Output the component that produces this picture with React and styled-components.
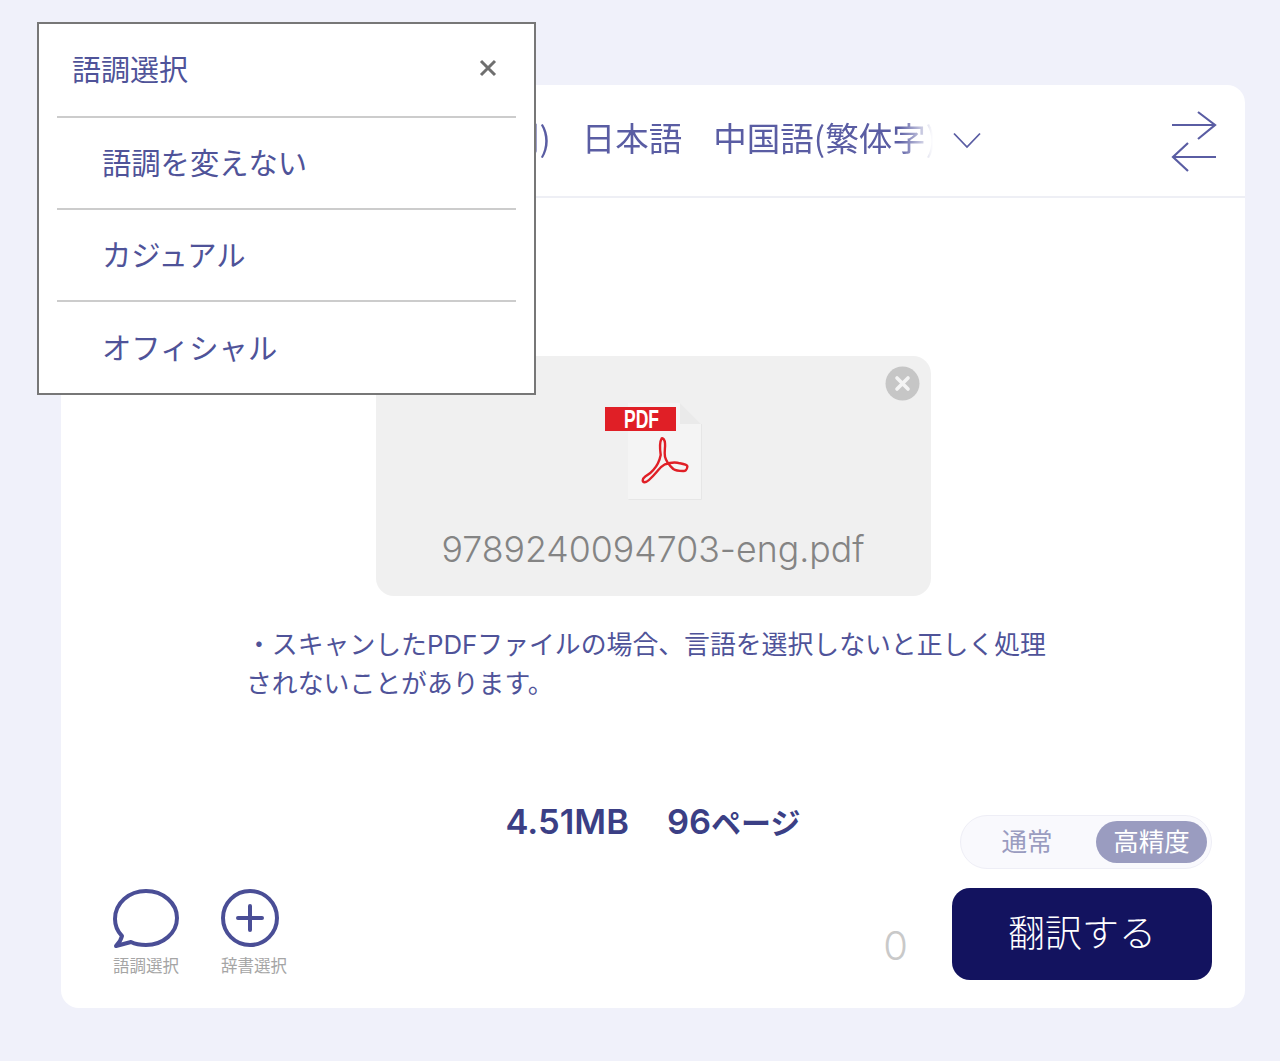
import React from "react";
import styled, { createGlobalStyle } from "styled-components";

const GlobalStyle = createGlobalStyle`
  * {
    box-sizing: border-box;
  }

  body {
    margin: 0;
    background: #f0f1fa;
    font-family: "Noto Sans CJK JP", "Noto Sans", sans-serif;
    font-weight: 400;
    color: #4f5399;
  }
`;

const Page = styled.div`
  position: relative;
  width: 1280px;
  height: 1061px;
  padding: 85px 35px 53px 61px;
`;

const Card = styled.main`
  height: 923px;
  background: #ffffff;
  border-radius: 18px;
  display: flex;
  flex-direction: column;
  overflow: hidden;
`;

const Header = styled.header`
  height: 113px;
  flex: none;
  display: flex;
  align-items: center;
  padding-right: 28px;
  border-bottom: 2px solid #eeeff5;
`;

const LangStrip = styled.div`
  width: 876px;
  flex: none;
  display: flex;
  justify-content: flex-end;
  gap: 31px;
  margin-bottom: 7px;
  white-space: nowrap;
  font-size: 33.5px;
  line-height: 46px;
  color: #5a5da3;
  -webkit-mask-image: linear-gradient(to right, #000 838px, transparent 872px);
  mask-image: linear-gradient(to right, #000 838px, transparent 872px);
`;

const Chevron = styled.svg`
  width: 28px;
  height: 17px;
  margin-left: 16px;
  flex: none;
`;

const SwapIcon = styled.svg`
  width: 46px;
  height: 62px;
  margin: 2px 0 0 auto;
  flex: none;
`;

const Body = styled.section`
  flex: 1;
  display: flex;
  flex-direction: column;
  align-items: center;
  padding-top: 158px;
`;

const FileBox = styled.div`
  position: relative;
  width: 555px;
  height: 240px;
  background: #f0f0f0;
  border-radius: 18px;
  display: flex;
  flex-direction: column;
  align-items: center;
  padding-top: 44px;
`;

const RemoveButton = styled.svg`
  position: absolute;
  top: 10px;
  right: 11px;
  width: 35px;
  height: 35px;
`;

const PdfIcon = styled.svg`
  width: 110px;
  height: 105px;
  margin-left: 3px;
  flex: none;
`;

const FileName = styled.div`
  margin-top: 22px;
  font-family: Inter, "Liberation Sans", sans-serif;
  font-weight: 300;
  font-size: 35.7px;
  line-height: 44px;
  white-space: nowrap;
  color: #848484;
`;

const Note = styled.p`
  width: 812px;
  margin: 29px 0 0 -2px;
  font-family: Inter, "Noto Sans CJK JP", sans-serif;
  font-size: 25.85px;
  line-height: 39px;
  white-space: nowrap;
  color: #4f5399;
`;

const Bottom = styled.div`
  width: 100%;
  margin-top: auto;
  padding: 0 33px 28px;
  display: grid;
  grid-template-columns: 1fr auto 1fr;
  grid-template-rows: auto auto;
`;

const Stats = styled.div`
  grid-column: 2;
  grid-row: 1;
  display: flex;
  gap: 38px;
  margin-top: -5px;
  font-family: Inter, "Noto Sans CJK JP", sans-serif;
  font-weight: 600;
  font-size: 34.5px;
  line-height: 44px;
  white-space: nowrap;
  color: #3b3f85;
`;

const StatUnit = styled.span`
  font-size: 30px;
`;

const Tools = styled.div`
  grid-column: 1;
  grid-row: 2;
  align-self: end;
  display: flex;
  gap: 42px;
  margin: 0 0 3px 19px;
`;

const Tool = styled.div`
  width: 66px;
  display: flex;
  flex-direction: column;
  align-items: flex-start;
  gap: 4px;
`;

const ToolLabel = styled.span`
  font-size: 16.5px;
  line-height: 24px;
  white-space: nowrap;
  color: #a5a5a5;
`;

const Actions = styled.div`
  grid-column: 3;
  grid-row: 1 / 3;
  display: flex;
  flex-direction: column;
  align-items: flex-end;
  gap: 19px;
  padding-top: 10px;
`;

const Toggle = styled.div`
  width: 252px;
  height: 54px;
  border: 1px solid #eeeef6;
  border-radius: 27px;
  background: #f9f9fd;
  display: flex;
  align-items: center;
  padding: 0 4px 0 11px;
`;

const ToggleOption = styled.div`
  width: ${(p) => (p.$active ? "111px" : "110px")};
  height: 42px;
  margin-left: ${(p) => (p.$active ? "auto" : "0")};
  padding-bottom: 5px;
  border-radius: 21px;
  display: flex;
  align-items: center;
  justify-content: center;
  font-size: 25.5px;
  color: ${(p) => (p.$active ? "#ffffff" : "#9a9cc0")};
  background: ${(p) => (p.$active ? "#9a9cc0" : "transparent")};
`;

const SubmitRow = styled.div`
  display: flex;
  align-items: center;
  gap: 44px;
`;

const Count = styled.span`
  font-family: Inter, "Liberation Sans", sans-serif;
  font-weight: 300;
  font-size: 40px;
  color: #c9c9c9;
  padding-top: 22px;
`;

const SubmitButton = styled.button`
  width: 260px;
  height: 92px;
  padding: 0 0 6px;
  border: 0;
  border-radius: 18px;
  background: #13135f;
  color: #ffffff;
  font-family: inherit;
  font-weight: 300;
  font-size: 37px;
`;

const Popup = styled.aside`
  position: absolute;
  top: 22px;
  left: 37px;
  width: 499px;
  height: 373px;
  background: #ffffff;
  border: 2px solid #777777;
  padding: 0 18px;
`;

const PopupTitle = styled.div`
  height: 94px;
  display: flex;
  align-items: center;
  justify-content: space-between;
  padding: 0 19px 4px 15px;
  border-bottom: 2px solid #cccccc;
  font-size: 29px;
  color: #4f5399;
`;

const CloseIcon = styled.svg`
  width: 18px;
  height: 18px;
`;

const Option = styled.div`
  height: 92px;
  display: flex;
  align-items: center;
  padding: 0 0 4px 45px;
  font-size: 29.3px;
  color: #4f5399;
  border-bottom: ${(p) => (p.$last ? "0" : "2px solid #cccccc")};
`;

const options = ["語調を変えない", "カジュアル", "オフィシャル"];

export default function App() {
  return (
    <>
      <GlobalStyle />
      <Page>
        <Card>
          <Header>
            <LangStrip>
              <span>英語(自動判別)</span>
              <span>日本語</span>
              <span>中国語(繁体字)</span>
            </LangStrip>
            <Chevron viewBox="0 0 28 17" fill="none" stroke="#5a5da3" strokeWidth="1.8">
              <path d="M1 1.5 14 15 27 1.5" />
            </Chevron>
            <SwapIcon viewBox="0 0 46 62" fill="none" stroke="#5a5da3" strokeWidth="2.2">
              <path d="M1 14H44M27 1l17 13-17 14" />
              <path d="M45 46H2M17 32 2 46l15 14" />
            </SwapIcon>
          </Header>
          <Body>
            <FileBox>
              <RemoveButton viewBox="0 0 35 35">
                <circle cx="17.5" cy="17.5" r="17" fill="#c6c6c6" />
                <path d="M12 12l11 11M23 12 12 23" stroke="#f4f4f4" strokeWidth="3.6" strokeLinecap="round" />
              </RemoveButton>
              <PdfIcon viewBox="600 400 110 105">
                <path d="M628 403h52l21 21v75h-73z" fill="#f4f4f4" />
                <path d="M680 403v21h21z" fill="#eaeaea" />
                <path d="M628.5 499.5h73V424" fill="none" stroke="#e6e6e6" />
                <rect x="605" y="407" width="71" height="24" fill="#e01f26" />
                <text
                  x="641.5"
                  y="428"
                  textAnchor="middle"
                  textLength="35"
                  lengthAdjust="spacingAndGlyphs"
                  fontFamily="Liberation Sans"
                  fontWeight="700"
                  fontSize="25"
                  fill="#fff"
                >
                  PDF
                </text>
                <path
                  d="M661.7 438.3C659.5 442 660 450 660.7 455 659.5 461 657 466 653.3 470 651 473 647.5 475 645 476.7 642 479 642 482 644.7 482.3 648.5 482 654 475 658.3 470 660 468 662 466 665 464.3 670 462.5 676 462 680 463.3 684 464 688 465 687.3 467 687 470 685 471.3 683 471 679 471 675.5 470.5 673.3 469 669 465 666 461 665 456.7 664 452 665.5 447 665 443.3 664.8 440 663 437.5 661.7 438.3Z"
                  fill="none"
                  stroke="#e01f26"
                  strokeWidth="2.4"
                />
              </PdfIcon>
              <FileName>9789240094703-eng.pdf</FileName>
            </FileBox>
            <Note>
              ・スキャンしたPDFファイルの場合、言語を選択しないと正しく処理
              <br />
              されないことがあります。
            </Note>
            <Bottom>
              <Stats>
                <span>4.51MB</span>
                <span>
                  96<StatUnit>ページ</StatUnit>
                </span>
              </Stats>
              <Tools>
                <Tool>
                  <svg width="66" height="60" viewBox="0 0 66 60" fill="none" stroke="#4a4e96" strokeWidth="4">
                    <path
                      d="M9 47C4 42 2 36 2 30 2 14 16 2 33 2s31 12 31 27-14 27-31 27c-6 0-11-1-15-3L3 57c2-2 5-6 6-10Z"
                      strokeLinejoin="round"
                    />
                  </svg>
                  <ToolLabel>語調選択</ToolLabel>
                </Tool>
                <Tool>
                  <svg width="58" height="60" viewBox="0 0 58 60" fill="none" stroke="#4a4e96">
                    <circle cx="29" cy="29" r="27" strokeWidth="4" />
                    <path d="M17 29H41M29 17V41" strokeWidth="4" strokeLinecap="round" />
                  </svg>
                  <ToolLabel>辞書選択</ToolLabel>
                </Tool>
              </Tools>
              <Actions>
                <Toggle>
                  <ToggleOption>通常</ToggleOption>
                  <ToggleOption $active>高精度</ToggleOption>
                </Toggle>
                <SubmitRow>
                  <Count>0</Count>
                  <SubmitButton>翻訳する</SubmitButton>
                </SubmitRow>
              </Actions>
            </Bottom>
          </Body>
        </Card>
        <Popup>
          <PopupTitle>
            語調選択
            <CloseIcon viewBox="0 0 18 18" stroke="#6f6f6f" strokeWidth="3">
              <path d="M2 2l14 14M16 2 2 16" />
            </CloseIcon>
          </PopupTitle>
          {options.map((label, i) => (
            <Option key={label} $last={i === options.length - 1}>
              {label}
            </Option>
          ))}
        </Popup>
      </Page>
    </>
  );
}
